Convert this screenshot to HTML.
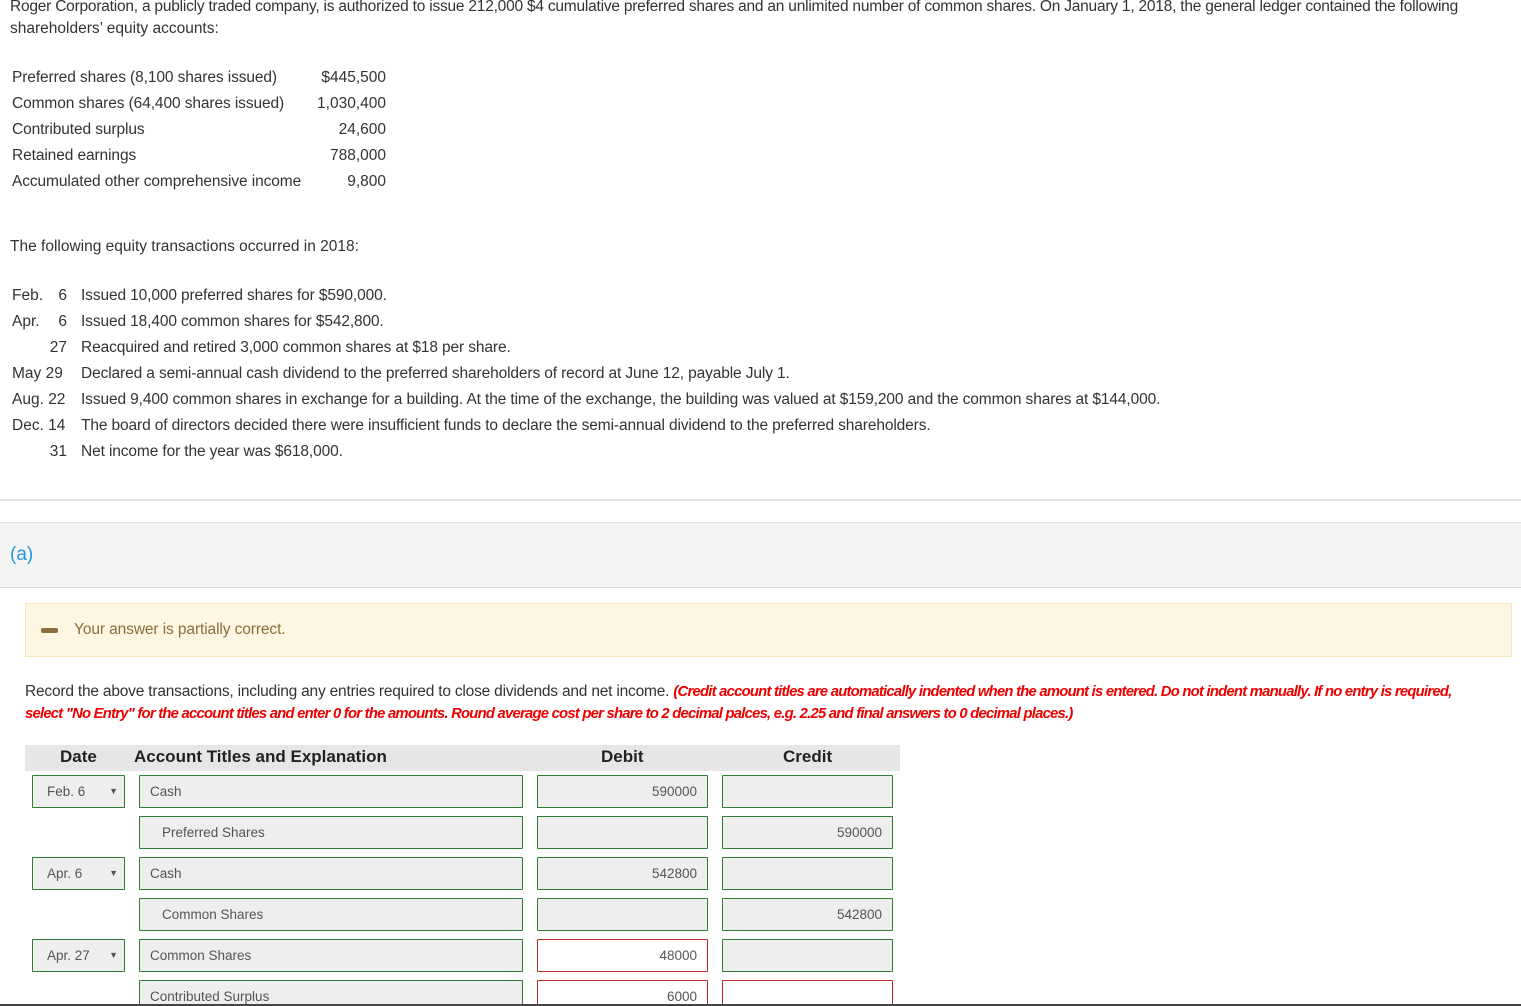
<!DOCTYPE html>
<html><head><meta charset="utf-8"><style>
*{margin:0;padding:0;box-sizing:border-box}
html,body{width:1521px;height:1006px;overflow:hidden}
body{background:#fff;font-family:"Liberation Sans",sans-serif;color:#333;font-size:15.5px;position:relative}
.a{position:absolute;white-space:nowrap}
.r{text-align:right}
.box{position:absolute;height:33px;border:1px solid #2e7d32;background:#eee;font-size:13.5px;color:#555;line-height:31px;padding:0 10px;border-radius:1px}
.red{border-color:#c62828;background:#fff}
.clip{position:absolute;left:0;top:0;width:1521px;height:1004px;overflow:hidden}
</style></head><body>
<div class="clip">
<div class="a" style="left:10px;top:-2px;font-size:15.5px;letter-spacing:-0.22px">Roger Corporation, a publicly traded company, is authorized to issue 212,000 $4 cumulative preferred shares and an unlimited number of common shares. On January 1, 2018, the general ledger contained the following</div>
<div class="a" style="left:10px;top:20px">shareholders’ equity accounts:</div>

<div class="a" style="left:12px;top:65px;line-height:26px;letter-spacing:-0.1px">Preferred shares (8,100 shares issued)<br>Common shares (64,400 shares issued)<br>Contributed surplus<br>Retained earnings<br>Accumulated other comprehensive income</div>
<div class="a r" style="left:300px;width:86px;top:65px;line-height:26px">$445,500<br>1,030,400<br>24,600<br>788,000<br>9,800</div>

<div class="a" style="left:10px;top:238px">The following equity transactions occurred in 2018:</div>

<div class="a" style="left:12px;top:283px;line-height:26px">Feb.<br>Apr.<br><br>May 29<br>Aug. 22<br>Dec. 14<br></div>
<div class="a r" style="left:40px;width:27px;top:283px;line-height:26px">6<br>6<br>27<br><br><br><br>31</div>
<div class="a" style="left:81px;top:283px;line-height:26px;letter-spacing:-0.12px">Issued 10,000 preferred shares for $590,000.<br>Issued 18,400 common shares for $542,800.<br>Reacquired and retired 3,000 common shares at $18 per share.<br>Declared a semi-annual cash dividend to the preferred shareholders of record at June 12, payable July 1.<br>Issued 9,400 common shares in exchange for a building. At the time of the exchange, the building was valued at $159,200 and the common shares at $144,000.<br>The board of directors decided there were insufficient funds to declare the semi-annual dividend to the preferred shareholders.<br>Net income for the year was $618,000.</div>

<div class="a" style="left:0;top:499px;width:1521px;height:2px;background:#e4e4e4"></div>
<div class="a" style="left:0;top:522px;width:1521px;height:66px;background:#f4f4f4;border-top:1px solid #ddd;border-bottom:1px solid #ddd"></div>
<div class="a" style="left:10px;top:544px;font-size:19px;color:#1e9be0">(a)</div>

<div class="a" style="left:25px;top:603px;width:1487px;height:54px;background:#fcf6e3;border:1px solid #f3e6bf"></div>
<div class="a" style="left:41px;top:628px;width:17px;height:5px;background:#8a6d3b;border-radius:2px"></div>
<div class="a" style="left:74px;top:621px;color:#8a6d3b;letter-spacing:-0.1px">Your answer is partially correct.</div>

<div class="a" style="left:25px;top:681px;line-height:22px;font-size:15.5px;letter-spacing:-0.2px">Record the above transactions, including any entries required to close dividends and net income. <i style="color:#e00;font-weight:bold;font-size:14.8px;letter-spacing:-0.75px">(Credit account titles are automatically indented when the amount is entered. Do not indent manually. If no entry is required,</i><br><i style="color:#e00;font-weight:bold;font-size:14.8px;letter-spacing:-0.75px">select "No Entry" for the account titles and enter 0 for the amounts. Round average cost per share to 2 decimal palces, e.g. 2.25 and final answers to 0 decimal places.)</i></div>

<div class="a" style="left:25px;top:745px;width:875px;height:26px;background:#e6e6e6"></div>
<div class="a" style="left:60px;top:747px;font-weight:bold;font-size:17px;color:#222">Date</div>
<div class="a" style="left:134px;top:747px;font-weight:bold;font-size:17px;color:#222">Account Titles and Explanation</div>
<div class="a" style="left:601px;top:747px;font-weight:bold;font-size:17px;color:#222">Debit</div>
<div class="a" style="left:783px;top:747px;font-weight:bold;font-size:17px;color:#222">Credit</div>

<div class="box" style="left:32px;top:775px;width:93px;padding-left:14px">Feb. 6<span style="position:absolute;right:6px;font-size:9px">▼</span></div>
<div class="box" style="left:139px;top:775px;width:384px">Cash</div>
<div class="box r" style="left:537px;top:775px;width:171px">590000</div>
<div class="box" style="left:722px;top:775px;width:171px"></div>

<div class="box" style="left:139px;top:816px;width:384px;padding-left:22px">Preferred Shares</div>
<div class="box" style="left:537px;top:816px;width:171px"></div>
<div class="box r" style="left:722px;top:816px;width:171px">590000</div>

<div class="box" style="left:32px;top:857px;width:93px;padding-left:14px">Apr. 6<span style="position:absolute;right:6px;font-size:9px">▼</span></div>
<div class="box" style="left:139px;top:857px;width:384px">Cash</div>
<div class="box r" style="left:537px;top:857px;width:171px">542800</div>
<div class="box" style="left:722px;top:857px;width:171px"></div>

<div class="box" style="left:139px;top:898px;width:384px;padding-left:22px">Common Shares</div>
<div class="box" style="left:537px;top:898px;width:171px"></div>
<div class="box r" style="left:722px;top:898px;width:171px">542800</div>

<div class="box" style="left:32px;top:939px;width:93px;padding-left:14px">Apr. 27<span style="position:absolute;right:6px;font-size:9px">▼</span></div>
<div class="box" style="left:139px;top:939px;width:384px">Common Shares</div>
<div class="box r red" style="left:537px;top:939px;width:171px">48000</div>
<div class="box" style="left:722px;top:939px;width:171px"></div>

<div class="box" style="left:139px;top:980px;width:384px">Contributed Surplus</div>
<div class="box r red" style="left:537px;top:980px;width:171px">6000</div>
<div class="box red" style="left:722px;top:980px;width:171px"></div>
</div>
<div class="a" style="left:0;top:1004px;width:1521px;height:2px;background:#444"></div>
</body></html>
